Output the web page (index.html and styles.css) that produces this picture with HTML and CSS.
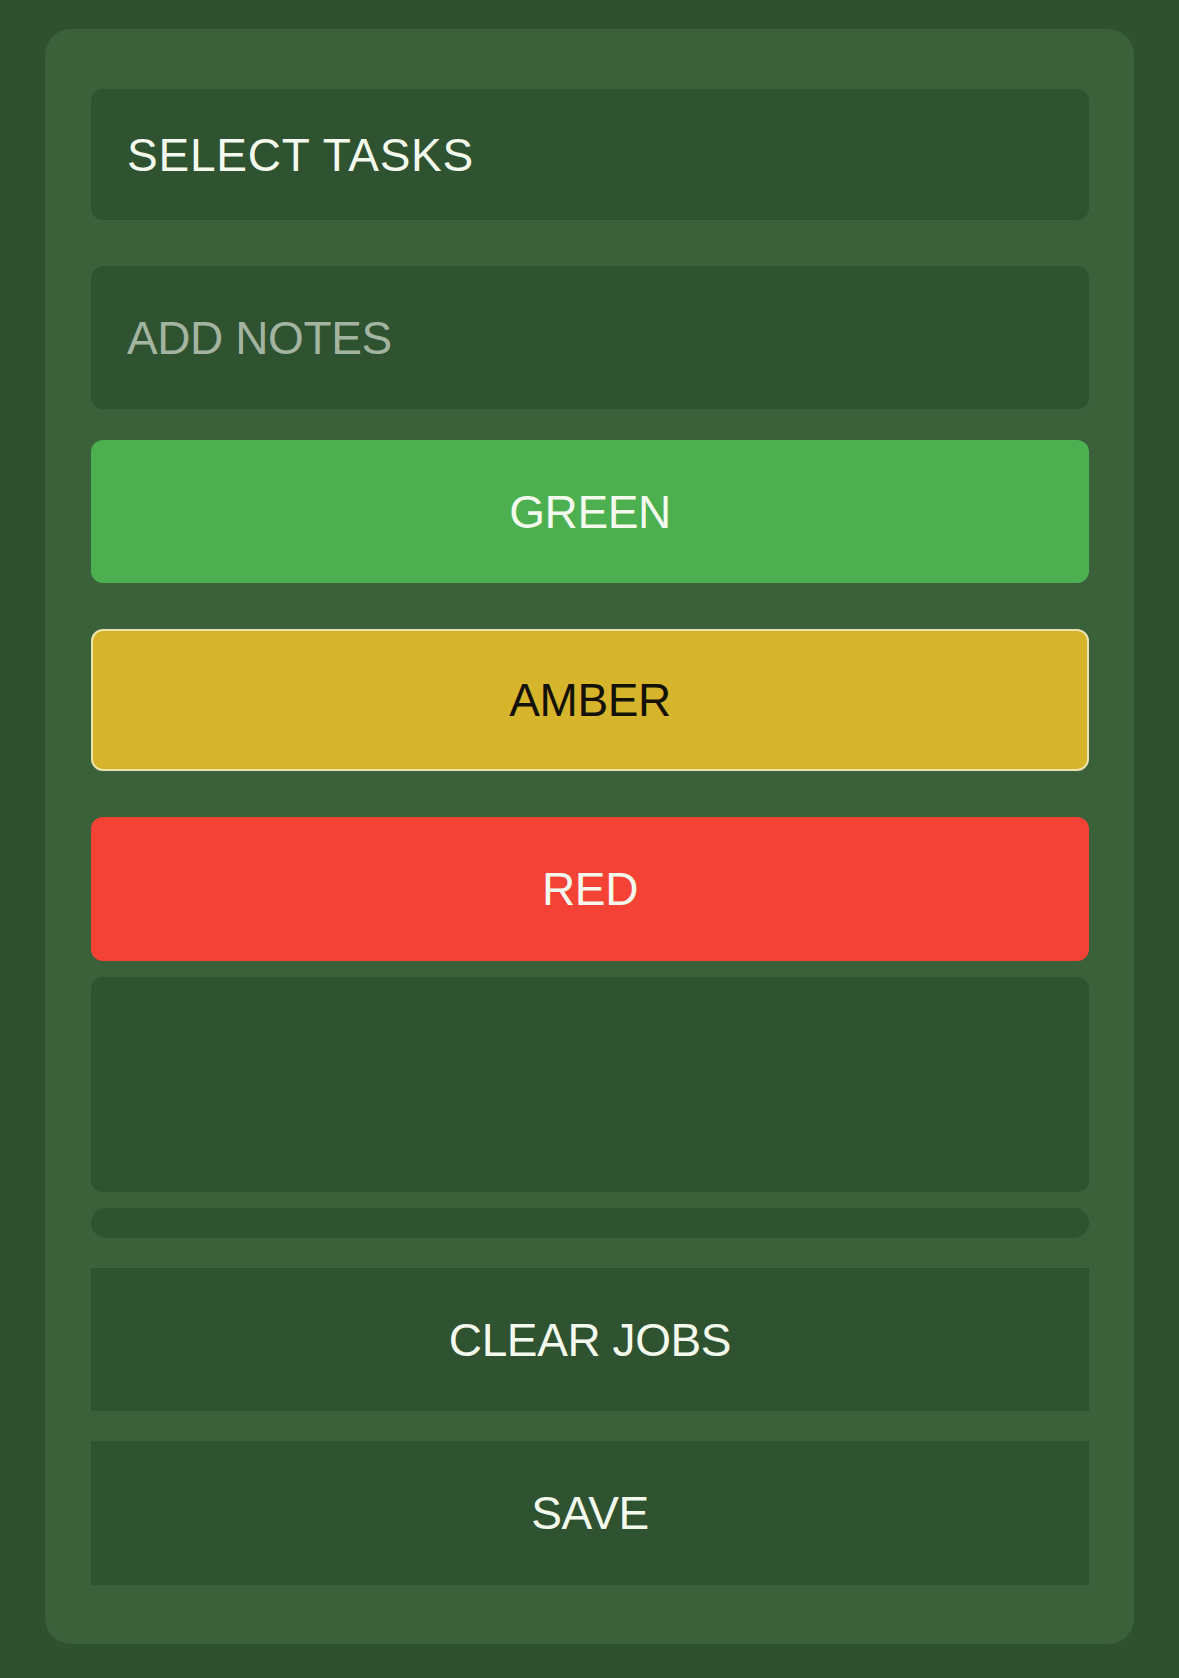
FILE: index.html
```html
<!DOCTYPE html>
<html lang="en">
<head>
<meta charset="utf-8">
<title>Tasks</title>
<link rel="stylesheet" href="styles.css">
</head>
<body>
  <main class="card">
    <div class="field field-select">SELECT TASKS</div>
    <div class="field field-notes">ADD NOTES</div>
    <button class="status status-green">GREEN</button>
    <button class="status status-amber">AMBER</button>
    <button class="status status-red">RED</button>
    <div class="panel"></div>
    <div class="bar"></div>
    <button class="action action-clear">CLEAR JOBS</button>
    <button class="action action-save">SAVE</button>
  </main>
</body>
</html>
```

FILE: styles.css
```css
* { box-sizing: border-box; }

html, body {
  margin: 0;
  padding: 0;
  background: #2f5130;
  font-family: "Liberation Sans", Arial, sans-serif;
}

body {
  width: 1179px;
  height: 1678px;
  padding: 29px 45px 0 45px;
}

.card {
  display: flex;
  flex-direction: column;
  background: #3b613b;
  border-radius: 26px;
  padding: 60px 45px 59px 46px;
  height: 1615px;
}

.field,
.status,
.action {
  display: flex;
  align-items: center;
  font-family: "Liberation Sans", Arial, sans-serif;
  font-size: 46px;
  letter-spacing: -0.4px;
  color: #f4f9ee;
  border: none;
  margin: 0;
  padding: 0;
}

.field {
  background: #2f5231;
  border-radius: 12px;
  padding-left: 36px;
}

.field-select {
  height: 131px;
  letter-spacing: 0.8px;
}

.field-notes {
  height: 143px;
  margin-top: 46px;
  color: #a3b4a0;
}

.status {
  justify-content: center;
  border-radius: 12px;
}

.status-green {
  height: 143px;
  margin-top: 31px;
  background: #4caf50;
}

.status-amber {
  height: 142px;
  margin-top: 46px;
  background: #d6b42c;
  border: 2px solid #ece3b0;
  color: #141208;
}

.status-red {
  height: 144px;
  margin-top: 46px;
  background: #f44336;
}

.panel {
  height: 215px;
  margin-top: 16px;
  background: #2f5231;
  border-radius: 12px;
}

.bar {
  height: 30px;
  margin-top: 16px;
  background: #2f5231;
  border-radius: 15px;
}

.action {
  justify-content: center;
  background: #2f5231;
  border-radius: 0;
}

.action-clear {
  height: 143px;
  margin-top: 30px;
}

.action-save {
  height: 144px;
  margin-top: 30px;
}
```
